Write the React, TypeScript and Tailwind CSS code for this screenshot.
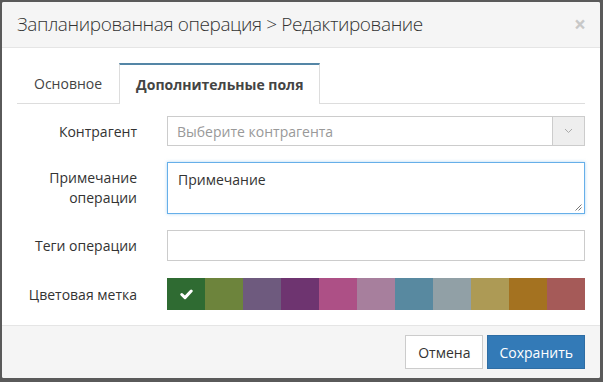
import React from "react";

const swatches = [
  "#2f6b32",
  "#6d843c",
  "#6e5a7e",
  "#6e3470",
  "#ad5086",
  "#a77f9d",
  "#5889a0",
  "#91a0a6",
  "#ad9a55",
  "#a47220",
  "#a55a58",
];

export default function App() {
  return (
    <div
      className="w-[603px] h-[382px] bg-[#5a5a5a] p-[2px] pr-[3px] pb-[4px]"
      style={{ fontFamily: '"Open Sans", "Liberation Sans", sans-serif' }}
    >
      <div className="w-full h-full bg-white flex flex-col rounded-[2px] overflow-hidden">
        {/* header */}
        <div className="h-[46px] bg-[#f5f5f5] border-b border-[#e5e5e5] flex items-center justify-between pl-[15px] pr-[14px] shrink-0">
          <div className="text-[19px] font-light text-[#333] leading-none tracking-[-0.4px]">
            Запланированная операция &gt; Редактирование
          </div>
          <div className="text-[21px] font-bold text-[#c8c8c8] leading-none">×</div>
        </div>

        {/* body */}
        <div className="px-[15px] pt-[15px] pb-[15px] text-[14px] text-[#333]">
          {/* tabs */}
          <div className="flex border-b border-[#ddd] h-[41px]">
            <div className="px-[17px] flex items-center text-[#444]">Основное</div>
            <div className="px-[16px] flex items-center font-bold text-[#444] border-t-[2px] border-t-[#5486a6] border-x border-x-[#ddd] bg-white -mb-px">
              Дополнительные поля
            </div>
          </div>

          <div className="mt-[12px] flex flex-col gap-[16px]">
            <div className="flex items-center">
              <div className="w-[120px] text-right text-[#333]">Контрагент</div>
              <div className="ml-[30px] flex-1 h-[30px] border border-[#ccc] flex">
                <div className="flex-1 flex items-center px-[9px] text-[#999]">Выберите контрагента</div>
                <div className="w-[32px] bg-[#eee] border-l border-[#ccc] flex items-center justify-center">
                  <svg width="9" height="6" viewBox="0 0 9 6">
                    <path d="M1 1 L4.5 4.5 L8 1" stroke="#aaa" strokeWidth="1" fill="none" />
                  </svg>
                </div>
              </div>
            </div>

            <div className="flex items-start">
              <div className="w-[120px] text-right text-[#333] leading-[20px] pt-[6px]">
                Примечание
                <br />
                операции
              </div>
              <div className="ml-[30px] flex-1 h-[52px] border border-[#66afe9] relative px-[10px] pt-[6px] text-[#333] shadow-[0_0_3px_rgba(102,175,233,0.5)]">
                Примечание
                <svg className="absolute right-[2px] bottom-[2px]" width="7" height="7" viewBox="0 0 7 7">
                  <path d="M6.5 0.5 L0.5 6.5 M6.5 3.5 L3.5 6.5" stroke="#777" strokeWidth="1" />
                </svg>
              </div>
            </div>

            <div className="flex items-center">
              <div className="w-[120px] text-right text-[#333]">Теги операции</div>
              <div className="ml-[30px] flex-1 h-[31px] border border-[#ccc]" />
            </div>

            <div className="flex items-center mt-[1px]">
              <div className="w-[120px] text-right text-[#333]">Цветовая метка</div>
              <div className="ml-[30px] flex-1 h-[32px] flex">
                {swatches.map((c, i) => (
                  <div key={c} className="flex-1 flex items-center justify-center" style={{ backgroundColor: c }}>
                    {i === 0 && (
                      <svg width="13" height="11" viewBox="0 0 13 11">
                        <path d="M1.8 5.5 L5 8.6 L11.2 2" stroke="white" strokeWidth="3" fill="none" strokeLinecap="round" strokeLinejoin="round" />
                      </svg>
                    )}
                  </div>
                ))}
              </div>
            </div>
          </div>
        </div>

        {/* footer */}
        <div className="flex-1 bg-[#f5f5f5] border-t border-[#e5e5e5] flex items-start justify-end gap-[4px] pr-[15px] pt-[9px]">
          <div className="h-[34px] px-[12px] bg-white border border-[#ccc] flex items-center text-[14px] text-[#333]">
            Отмена
          </div>
          <div className="h-[34px] px-[11px] bg-[#337ab7] border border-[#2e6da4] flex items-center text-[14px] text-white">
            Сохранить
          </div>
        </div>
      </div>
    </div>
  );
}
